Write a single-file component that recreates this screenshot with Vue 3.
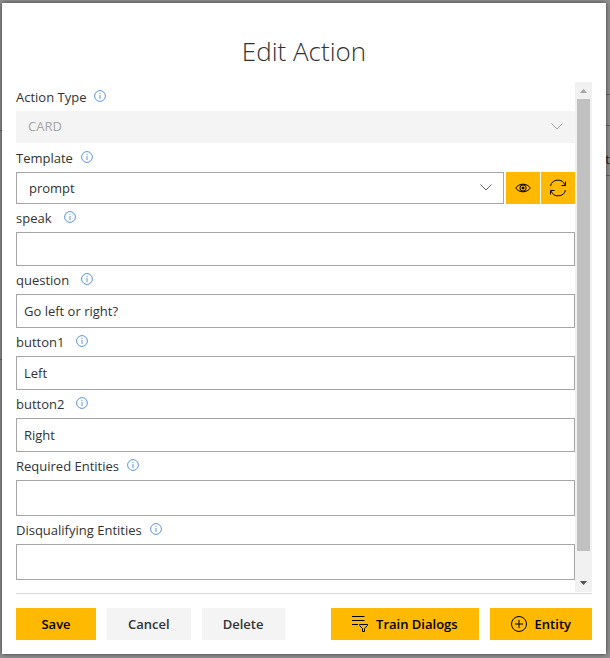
<script setup>
import { ref } from 'vue'

const template = ref('prompt')
const fields = ref([
  { id: 'speak', label: 'speak', value: '', kind: 'text' },
  { id: 'question', label: 'question', value: 'Go left or right?', kind: 'text' },
  { id: 'button1', label: 'button1', value: 'Left', kind: 'text' },
  { id: 'button2', label: 'button2', value: 'Right', kind: 'text' },
  { id: 'required', label: 'Required Entities', value: '', kind: 'picker' },
  { id: 'disqualifying', label: 'Disqualifying Entities', value: '', kind: 'picker' }
])
</script>

<template>
  <div class="overlay">
    <div class="behind" aria-hidden="true">
      <i class="rule left-a"></i>
      <i class="rule left-b"></i>
      <i class="rule right-a"></i>
      <i class="rule right-b"></i>
      <i class="rule right-c"></i>
      <span class="peek">nt</span>
    </div>

    <main class="modal">
      <h1>Edit Action</h1>

      <div class="viewport">
        <form id="action-form" class="fields" @submit.prevent>
          <div class="field">
            <div class="caption tall">
              <label for="action-type">Action Type</label>
              <svg class="info" viewBox="0 0 12 12"><circle cx="6" cy="6" r="5.4" /><path d="M6 5v4M6 3v1" /></svg>
            </div>
            <div class="select-box">
              <select id="action-type" disabled><option>CARD</option></select>
              <svg class="chevron pale" viewBox="0 0 12 7"><path d="M.5 .5 6 6 11.5 .5" /></svg>
            </div>
          </div>

          <div class="field">
            <div class="caption tall">
              <label for="template">Template</label>
              <svg class="info" viewBox="0 0 12 12"><circle cx="6" cy="6" r="5.4" /><path d="M6 5v4M6 3v1" /></svg>
            </div>
            <div class="template-row">
              <div class="select-box">
                <select id="template" v-model="template"><option>prompt</option></select>
                <svg class="chevron" viewBox="0 0 12 7"><path d="M.5 .5 6 6 11.5 .5" /></svg>
              </div>
              <div class="tools">
                <button type="button" class="tool" aria-label="Preview">
                  <svg width="16" height="16" viewBox="0 0 16 16">
                    <path d="M.7 8C2.4 5.5 5 4.2 8 4.2S13.6 5.500 15.3 8C13.6 10.5 11 11.8 8 11.8S2.4 10.5 .7 8Z" />
                    <circle cx="8" cy="8" r="3.1" />
                    <circle class="solid" cx="8" cy="8" r="1" />
                  </svg>
                </button>
                <button type="button" class="tool" aria-label="Refresh">
                  <svg width="18" height="18" viewBox="0 0 18 18">
                    <path d="M1.5 7A7.6 7.6 0 0 1 15.9 5.8M16.5 11A7.6 7.6 0 0 1 2.1 12.2" />
                    <path d="M16.5 2.5V6.5H12.5M1.5 15.5V11.5H5.5" />
                  </svg>
                </button>
              </div>
            </div>
          </div>

          <div v-for="f in fields" :key="f.id" class="field">
            <div class="caption" :class="{ spaced: f.kind === 'text' }">
              <label :for="f.id">{{ f.label }}</label>
              <svg class="info" viewBox="0 0 12 12"><circle cx="6" cy="6" r="5.4" /><path d="M6 5v4M6 3v1" /></svg>
            </div>
            <input :id="f.id" v-model="f.value" type="text" :class="f.kind" />
          </div>
        </form>

        <div class="scrollbar" aria-hidden="true">
          <svg viewBox="0 0 17 17"><path class="dim" d="M5 11h7L8.5 7Z" /></svg>
          <div class="track"><div class="thumb"></div></div>
          <svg viewBox="0 0 17 17"><path d="M5 6h7L8.5 10Z" /></svg>
        </div>
      </div>

      <footer>
        <div class="group">
          <button type="submit" form="action-form" class="btn primary">Save</button>
          <button type="button" class="btn">Cancel</button>
          <button type="button" class="btn">Delete</button>
        </div>
        <div class="group">
          <button type="button" class="btn primary">
            <svg width="16" height="16" viewBox="0 0 16 16">
              <path d="M0 .5H12.5M0 4.5H12.5M0 8.5H6M7.5 8.5H15.5V9.5L12.5 12.5V15.5H10.5V12.5L7.5 9.5Z" />
            </svg>
            Train Dialogs
          </button>
          <button type="button" class="btn primary">
            <svg width="16" height="16" viewBox="0 0 16 16">
              <circle cx="8" cy="8" r="7.5" />
              <path d="M8 4V12M4 8H12" />
            </svg>
            Entity
          </button>
        </div>
      </footer>
    </main>
  </div>
</template>

<style>
body {
  margin: 0;
  background: #929292;
}
</style>

<style scoped>
* {
  box-sizing: border-box;
}

.overlay {
  position: relative;
  display: flex;
  min-height: 100vh;
  padding: 3px 4px 4px 2px;
  overflow: hidden;
  background: #929292;
  color: #333;
  font: 13px/20px "Open Sans", "Noto Sans", sans-serif;
}

.behind {
  position: absolute;
  inset: 0;
}

.rule {
  position: absolute;
  width: 4px;
  height: 1px;
  background: #666;
}

.left-a { left: 0; top: 130px; }
.left-b { left: 0; top: 359px; }
.right-a { right: 0; top: 94px; }
.right-b { right: 0; top: 125px; }
.right-c { right: 0; top: 175px; }

.peek {
  position: absolute;
  right: 0;
  top: 149px;
  color: #222;
}

.modal {
  position: relative;
  display: flex;
  flex: 1;
  flex-direction: column;
  min-width: 0;
  padding: 31px 14px 14px;
  background: #fff;
  box-shadow: 0 0 5px rgba(0, 0, 0, 0.6);
}

h1 {
  margin: 0 0 14px;
  font-size: 26px;
  font-weight: 300;
  line-height: 34px;
  text-align: center;
}

.viewport {
  display: flex;
  flex: 1;
}

.fields {
  flex: 1;
  min-width: 0;
}

.caption {
  display: flex;
  gap: 8px;
  height: 28px;
  padding-top: 4px;
}

.caption.tall {
  height: 29px;
  padding-top: 5px;
}

.caption.spaced {
  gap: 12px;
}

.info {
  width: 12px;
  height: 12px;
  margin-top: 3px;
  fill: none;
  stroke: #5b96dc;
  stroke-width: 1;
}

input,
select {
  display: block;
  width: 100%;
  margin: 0;
  border: 1px solid #a6a6a6;
  border-radius: 0;
  background: #fff;
  color: #333;
  font: inherit;
  outline: none;
}

input {
  height: 34px;
  padding: 0 7px;
}

input.picker {
  height: 36px;
}

.select-box {
  position: relative;
  flex: 1;
}

select {
  height: 32px;
  padding: 0 32px 0 12px;
  appearance: none;
}

select:disabled {
  padding: 0 32px 2px 11px;
  border-color: #f4f4f4;
  background: #f4f4f4;
  color: #a6a6a6;
  opacity: 1;
}

.chevron {
  position: absolute;
  top: 12px;
  right: 12px;
  width: 12px;
  height: 7px;
  fill: none;
  stroke: #666;
  pointer-events: none;
}

.chevron.pale {
  stroke: #a6a6a6;
}

.template-row {
  display: flex;
  gap: 2px;
}

.tools {
  display: flex;
  gap: 1px;
}

.tool {
  display: grid;
  place-items: center;
  width: 34px;
  height: 32px;
  padding: 0;
  border: 0;
  background: #ffb900;
}

.tool svg,
.btn svg {
  fill: none;
  stroke: #000;
  stroke-width: 1;
}

.tool .solid {
  fill: #000;
}

.scrollbar {
  display: flex;
  flex-direction: column;
  width: 17px;
  background: #f1f1f1;
}

.scrollbar svg {
  display: block;
  height: 17px;
  fill: #505050;
}

.scrollbar .dim {
  fill: #a3a3a3;
}

.track {
  flex: 1;
  padding: 0 2px;
}

.thumb {
  height: 95%;
  background: #c1c1c1;
}

footer {
  display: flex;
  justify-content: space-between;
  margin-top: 1px;
  padding-top: 14px;
  border-top: 1px solid #dadada;
}

.group {
  display: flex;
  gap: 11px;
}

.btn {
  display: flex;
  align-items: center;
  justify-content: center;
  gap: 8px;
  min-width: 83px;
  height: 32px;
  padding: 0 21px;
  border: 0;
  background: #f4f4f4;
  color: #333;
  font: 600 13px/20px "Open Sans", "Noto Sans", sans-serif;
}

.btn.primary {
  min-width: 80px;
  background: #ffb900;
  color: #000;
}
</style>
